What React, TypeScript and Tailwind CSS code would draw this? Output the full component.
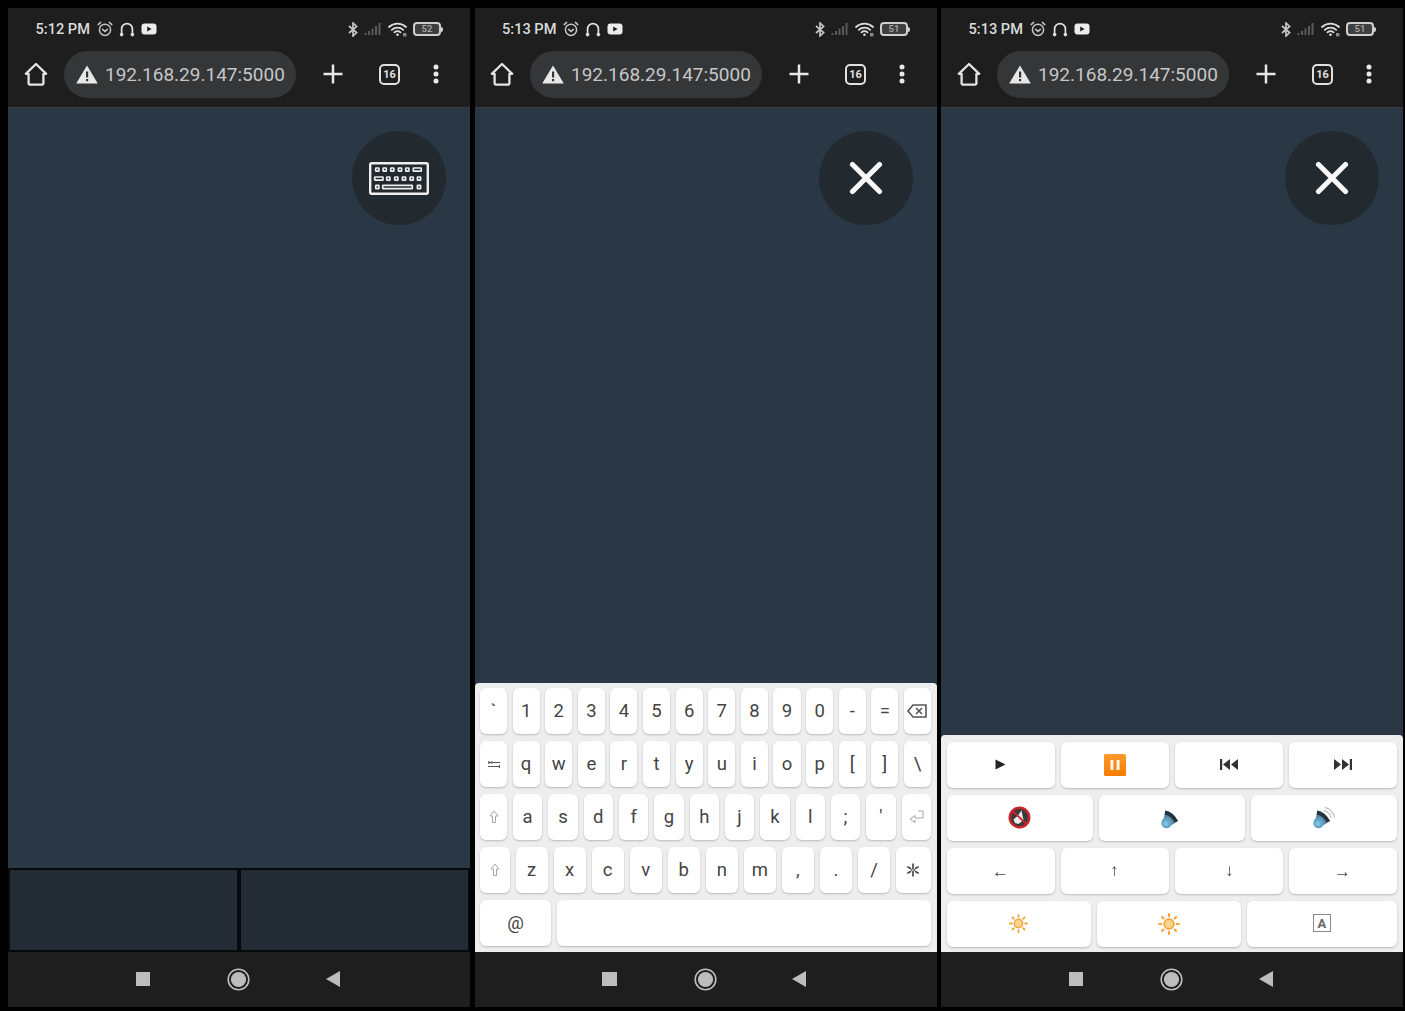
import React from "react";

const F = { fontFamily: "Roboto, 'Liberation Sans', sans-serif" };

function Alarm() {
  return (
    <svg width="16" height="16" viewBox="0 0 16 16" fill="none" stroke="#c4c4c4" strokeWidth="1.5" strokeLinecap="round">
      <circle cx="8" cy="8.8" r="5.6" />
      <path d="M1.2 3.6 3.6 1.4M14.8 3.6 12.4 1.4M5.6 8.4 8 10.4l2.4-2" />
    </svg>
  );
}
function Headset() {
  return (
    <svg width="16" height="15" viewBox="0 0 16 15" fill="none" stroke="#e0e0e0" strokeWidth="1.7" strokeLinecap="round">
      <path d="M2.6 11V7a5.4 5.4 0 0 1 10.8 0v4" />
      <circle cx="2.6" cy="12.6" r="1.8" fill="#e0e0e0" stroke="none" />
      <circle cx="13.4" cy="12.6" r="1.8" fill="#e0e0e0" stroke="none" />
    </svg>
  );
}
function Yt() {
  return (
    <svg width="16" height="12" viewBox="0 0 16 12">
      <rect x="0.5" y="0.5" width="15" height="11" rx="3" fill="#ececec" />
      <path d="M6.2 3.4 10.6 6l-4.4 2.6z" fill="#1e1e1e" />
    </svg>
  );
}
function Bt() {
  return (
    <svg width="10" height="15" viewBox="0 0 10 15" fill="none" stroke="#c4c4c4" strokeWidth="1.7">
      <path d="M1 4l7.6 6.6L5 14V1l3.6 3.4L1 11" />
    </svg>
  );
}
function Signal() {
  return (
    <svg width="18" height="14" viewBox="0 0 18 14" fill="#5a5a5a">
      <rect x="0.5" y="11" width="2" height="2" />
      <rect x="4" y="9" width="2" height="4" />
      <rect x="7.5" y="6.5" width="2" height="6.5" />
      <rect x="11" y="4" width="2" height="9" />
      <rect x="14.5" y="1" width="2" height="12" />
    </svg>
  );
}
function Wifi() {
  return (
    <svg width="20" height="15" viewBox="0 0 20 15" fill="none" stroke="#dcdcdc" strokeWidth="1.8" strokeLinecap="round">
      <path d="M1 5a12.5 12.5 0 0 1 17 0M3.8 7.8a8.4 8.4 0 0 1 11.4 0M6.5 10.4a4.4 4.4 0 0 1 6 0" />
      <circle cx="9.5" cy="12.8" r="1.3" fill="#dcdcdc" stroke="none" />
      <rect x="15" y="11" width="3.4" height="3.4" fill="#8a8a8a" stroke="none" />
    </svg>
  );
}
function Battery({ n }: { n: string }) {
  return (
    <div className="flex items-center">
      <div className="w-[28px] h-[14px] border-2 border-[#cfcfcf] rounded-[4px] flex items-center justify-center text-[9.5px] leading-none font-medium text-[#aaaaaa] bg-[#3f3f3f]">
        {n}
      </div>
      <div className="w-[2px] h-[5px] bg-[#cfcfcf] rounded-r-sm" />
    </div>
  );
}

function StatusBar({ time, battery, nudge }: { time: string; battery: string; nudge?: boolean }) {
  return (
    <div className={"h-[42px] flex items-center pr-[27px] shrink-0 " + (nudge ? "pl-[27px]" : "pl-[27.5px]")}>
      <span className="text-[14.6px] font-medium text-[#dadada] mr-[7px] leading-none">{time}</span>
      <div className="flex items-center gap-[6px]">
        <Alarm />
        <Headset />
        <Yt />
      </div>
      <div className="ml-auto flex items-center">
        <Bt />
        <span className="ml-[6px]"><Signal /></span>
        <span className="ml-[6px]"><Wifi /></span>
        <span className="ml-[5px]"><Battery n={battery} /></span>
      </div>
    </div>
  );
}

function Toolbar({ nudge }: { nudge?: boolean }) {
  return (
    <div className={"h-[58px] shrink-0 border-b border-[#3c3d3e] pb-[9px] flex items-center " + (nudge ? "pl-[15px]" : "pl-[16px]")}>
      <svg width="24" height="24" viewBox="0 0 24 24" fill="none" stroke="#e4e4e4" strokeWidth="2.3" strokeLinejoin="round" className="mr-[16px]">
        <path d="M1.8 11.8 12 2l10.2 9.8h-2.8v9.8a1 1 0 0 1-1 1H5.6a1 1 0 0 1-1-1v-9.8z" />
      </svg>
      <div className="w-[232px] h-[47px] rounded-full bg-[#343638] flex items-center pl-[12px]">
        <svg width="22" height="19" viewBox="0 0 22 19" className="mr-[7px] shrink-0">
          <path d="M11 0.5 21.8 18.6H0.2z" fill="#e8e8e8" />
          <rect x="10" y="6.5" width="2.2" height="6" fill="#343638" />
          <rect x="10" y="14" width="2.2" height="2.2" fill="#343638" />
        </svg>
        <span className="text-[19px] text-[#c6c7c8] leading-none whitespace-nowrap pt-[1px]">192.168.29.147:5000</span>
      </div>
      <svg width="20" height="20" viewBox="0 0 20 20" stroke="#e8e8e8" strokeWidth="2.5" className="ml-[27px]">
        <path d="M10 0.5v19M0.5 10h19" />
      </svg>
      <div className="ml-[36px] w-[21px] h-[21px] border-2 border-[#e0e0e0] rounded-[5px] flex items-center justify-center text-[11px] font-bold leading-none text-[#e0e0e0]">
        16
      </div>
      <svg width="6" height="20" viewBox="0 0 6 20" fill="#e8e8e8" className="ml-[33px]">
        <circle cx="3" cy="3" r="2.5" />
        <circle cx="3" cy="10" r="2.5" />
        <circle cx="3" cy="17" r="2.5" />
      </svg>
    </div>
  );
}

function NavBar({ nudge }: { nudge?: boolean }) {
  return (
    <div className={"h-[55px] shrink-0 bg-[#1e1e1e] flex items-center pb-[1px] " + (nudge ? "pl-[127px]" : "pl-[127.5px]")}>
      <div className="w-[14.5px] h-[14.5px] bg-[#bdbdbd]" />
      <svg width="23" height="23" viewBox="0 0 23 23" className="ml-[77px]">
        <circle cx="11.5" cy="11.5" r="10.3" fill="none" stroke="#bdbdbd" strokeWidth="1.6" />
        <circle cx="11.5" cy="11.5" r="7.6" fill="#bdbdbd" />
      </svg>
      <svg width="14" height="16" viewBox="0 0 14 16" className="ml-[75.5px]">
        <path d="M14 0v16L0 8z" fill="#bdbdbd" />
      </svg>
    </div>
  );
}

function KeyboardIcon() {
  const sq = (x: number, y: number) => <rect key={x + "-" + y} x={x - 1.6} y={y - 1.6} width="3.2" height="3.2" rx="0.4" />;
  return (
    <svg width="60" height="33" viewBox="0 0 60 33" fill="none" stroke="#eeeeee" strokeWidth="1.7">
      <rect x="1.2" y="1.2" width="57.6" height="30.6" rx="1.5" strokeWidth="2.4" />
      {[8.3, 15.7, 23.3, 31, 38.3].map((x) => sq(x, 7.6))}
      <rect x="44.3" y="6" width="8" height="3.2" rx="0.4" />
      <rect x="5.7" y="15" width="8.3" height="3.2" rx="0.4" />
      {[19.3, 27.3, 35, 42.7, 50].map((x) => sq(x, 16.6))}
      {sq(8.3, 25)}
      <rect x="13.7" y="23.4" width="29.6" height="3.2" rx="0.4" />
      {sq(50, 25)}
    </svg>
  );
}

function Fab({ close }: { close?: boolean }) {
  return (
    <div className="absolute top-[23px] right-[24px] w-[94px] h-[94px] rounded-full bg-[#22292f] flex items-center justify-center">
      {close ? (
        <svg width="34" height="34" viewBox="0 0 34 34" stroke="#f8f8f8" strokeWidth="5.2" strokeLinecap="round">
          <path d="M3.5 3.5l27 27M30.5 3.5l-27 27" />
        </svg>
      ) : (
        <KeyboardIcon />
      )}
    </div>
  );
}

function Key({ className = "", children }: { className?: string; children?: React.ReactNode }) {
  return (
    <div className={"h-[46px] bg-white rounded-[6px] shadow-[0_1px_2px_rgba(0,0,0,0.22)] flex items-center justify-center text-[#444444] leading-none " + className}>
      {children}
    </div>
  );
}

const Backspace = () => (
  <svg width="20" height="14" viewBox="0 0 20 14" fill="none" stroke="#555" strokeWidth="1.6">
    <path d="M6 1h13v12H6L1 7z" />
    <path d="M9 4l6 6M15 4l-6 6" />
  </svg>
);
const Tab = () => (
  <svg width="12" height="9" viewBox="0 0 12 9" fill="none" stroke="#555" strokeWidth="1.1">
    <path d="M0 2.5h4M1 1v3M4 1v3M5 2.5h7M0 6.5h11M11.5 5v3" />
  </svg>
);
const Shift = () => (
  <svg width="10" height="14" viewBox="0 0 10 14" fill="none" stroke="#a6a6a6" strokeWidth="1">
    <path d="M5 1 1 6h2.5v6.5h3V6H9z" />
  </svg>
);
const Enter = () => (
  <svg width="15" height="14" viewBox="0 0 15 14" fill="none" stroke="#a6a6a6" strokeWidth="1">
    <path d="M9 1h5v7H6V5.5L1 9l5 3.5V10" />
  </svg>
);
const Star = () => (
  <svg width="14" height="14" viewBox="0 0 14 14" stroke="#3f3f3f" strokeWidth="1.6" fill="none">
    <path d="M7 0.5v4.5M7 9v4.5M1.3 3.6 5 5.7M9 8.3l3.7 2.1M12.7 3.6 9 5.7M5 8.3l-3.7 2.1" />
    <circle cx="7" cy="7" r="1.4" strokeWidth="1" />
  </svg>
);

function KeyRow({ keys, gap, firstW, lastW }: { keys: React.ReactNode[]; gap: string; firstW?: string; lastW?: string }) {
  return (
    <div className={"flex " + gap}>
      {keys.map((k, i) => {
        const w = i === 0 && firstW ? firstW + " shrink-0" : i === keys.length - 1 && lastW ? lastW + " shrink-0" : "flex-1 min-w-0";
        return (
          <Key key={i} className={w + " text-[18.5px]"}>
            {k}
          </Key>
        );
      })}
    </div>
  );
}

function Keyboard() {
  return (
    <div className="h-[269px] shrink-0 bg-[#eeeeee] rounded-t-[4px] pt-[5px] pl-[5px] pr-[6px] flex flex-col gap-[7px]">
      <KeyRow gap="gap-[5.6px]" keys={["`", "1", "2", "3", "4", "5", "6", "7", "8", "9", "0", "-", "=", <Backspace />]} />
      <KeyRow gap="gap-[5.6px]" keys={[<Tab />, "q", "w", "e", "r", "t", "y", "u", "i", "o", "p", "[", "]", "\\"]} />
      <KeyRow gap="gap-[5.9px]" firstW="w-[27px]" keys={[<Shift />, "a", "s", "d", "f", "g", "h", "j", "k", "l", ";", "'", <Enter />]} />
      <KeyRow gap="gap-[6px]" firstW="w-[29.5px]" lastW="w-[35px]" keys={[<Shift />, "z", "x", "c", "v", "b", "n", "m", ",", ".", "/", <Star />]} />
      <KeyRow gap="gap-[6px]" firstW="w-[71px]" keys={["@", ""]} />
    </div>
  );
}

const Play = () => (
  <svg width="11" height="11" viewBox="0 0 11 11"><path d="M0.5 0.5 10.5 5.5 0.5 10.5z" fill="#222" /></svg>
);
const Prev = () => (
  <svg width="18" height="11" viewBox="0 0 18 11" fill="#333">
    <rect x="0" y="0" width="2.2" height="11" />
    <path d="M10 0v11L3 5.5zM18 0v11l-7-5.5z" />
  </svg>
);
const Next = () => (
  <svg width="18" height="11" viewBox="0 0 18 11" fill="#333">
    <rect x="15.8" y="0" width="2.2" height="11" />
    <path d="M0 0v11l7-5.5zM8 0v11l7-5.5z" />
  </svg>
);
const Pause = () => (
  <svg width="22" height="22" viewBox="0 0 22 22">
    <defs>
      <linearGradient id="pz" x1="0" y1="0" x2="0" y2="1">
        <stop offset="0" stopColor="#fb9a2b" />
        <stop offset="1" stopColor="#f57c00" />
      </linearGradient>
    </defs>
    <rect width="22" height="22" rx="1.5" fill="url(#pz)" />
    <rect x="6.4" y="6" width="3" height="10" rx="0.6" fill="#fff" opacity="0.92" />
    <rect x="12.6" y="6" width="3" height="10" rx="0.6" fill="#fff" opacity="0.92" />
  </svg>
);
const Speaker = ({ waves }: { waves?: boolean }) => (
  <svg width="24" height="24" viewBox="0 0 24 24">
    {waves && (
      <path d="M11.5 4.5a8.5 8.5 0 0 1 7.5 8M12.5 1.5a12 12 0 0 1 10 10" fill="none" stroke="#c2c2c2" strokeWidth="1.3" />
    )}
    <path d="M5.5 4.5Q13 6 18 15L9.5 20.5 3.5 13z" fill="#5d87a0" />
    <path d="M5.5 4.5Q13 6 18 15L14.5 16.5Q11.5 10 4.5 8.5z" fill="#253240" />
    <circle cx="6.5" cy="17" r="5.2" fill="#5fa5c8" />
    <circle cx="6" cy="17.5" r="2.6" fill="#7fc0dc" />
  </svg>
);
const Muted = () => (
  <svg width="23" height="23" viewBox="0 0 23 23">
    <circle cx="11.5" cy="11.5" r="9.8" fill="#3a3a3a" stroke="#c8252c" strokeWidth="2.4" />
    <path d="M13.5 4.5 15.5 14 10.5 18 7 17 5.5 13.5 9.5 10z" fill="#ececec" />
    <path d="M4.5 5 18.5 18" stroke="#c8252c" strokeWidth="1.8" />
  </svg>
);
const Sun = ({ s }: { s: number }) => (
  <svg width={s} height={s} viewBox="0 0 20 20" fill="none" stroke="#f4a338" strokeLinecap="round">
    <circle cx="10" cy="10" r="4.4" strokeWidth="1.5" fill="#fbd58e" />
    <path strokeWidth="1.9" d="M10 1v2M10 17v2M1 10h2M17 10h2M3.6 3.6l1.4 1.4M15 15l1.4 1.4M3.6 16.4 5 15M15 5l1.4-1.4" />
  </svg>
);

function MediaPanel() {
  const b = "text-[17px] ";
  const arrow = "will-change-transform text-[#444444]";
  return (
    <div className="h-[217px] shrink-0 bg-[#eeeeee] rounded-t-[4px] pt-[6.5px] pl-[5.5px] pr-[6px] flex flex-col gap-[7px]">
      <div className="grid grid-cols-4 gap-[6px]">
        <Key><Play /></Key>
        <Key><Pause /></Key>
        <Key><Prev /></Key>
        <Key><Next /></Key>
      </div>
      <div className="grid grid-cols-3 gap-[6px]">
        <Key><Muted /></Key>
        <Key><Speaker /></Key>
        <Key><Speaker waves /></Key>
      </div>
      <div className="grid grid-cols-4 gap-[6px]">
        <Key className={b + "pt-[2px]"}><span className={arrow}>←</span></Key>
        <Key className={b}><span className={arrow}>↑</span></Key>
        <Key className={b}><span className={arrow}>↓</span></Key>
        <Key className={b + "pt-[2px]"}><span className={arrow}>→</span></Key>
      </div>
      <div className="grid grid-cols-[144px_144px_1fr] gap-[6px]">
        <Key><Sun s={19} /></Key>
        <Key><Sun s={22} /></Key>
        <Key className="pb-[1px]">
          <div className="w-[18px] h-[18px] border border-[#8a8a8a] flex items-center justify-center text-[13px] font-bold text-[#666]">A</div>
        </Key>
      </div>
    </div>
  );
}

function Phone({ time, battery, close, nudge, children, className = "" }: { time: string; battery: string; close?: boolean; nudge?: boolean; children?: React.ReactNode; className?: string }) {
  return (
    <div className={"w-[462px] h-[999px] shrink-0 bg-[#1e1e1e] flex flex-col " + className}>
      <StatusBar time={time} battery={battery} nudge={nudge} />
      <Toolbar nudge={nudge} />
      <div className="flex-1 min-h-0 relative bg-[#2a3745] flex flex-col justify-end">
        <Fab close={close} />
        {children}
      </div>
      <NavBar nudge={nudge} />
    </div>
  );
}

export default function App() {
  return (
    <div className="w-[1405px] h-[1011px] bg-black flex pt-[8px] pl-[8px] overflow-hidden" style={F}>
      <Phone time="5:12 PM" battery="52">
        <div className="h-[84px] shrink-0 flex bg-[#070a0d] border-t-2 border-[#070a0d]">
          <div className="ml-[1.5px] mb-[2px] w-[227px] bg-[#232c35]" />
          <div className="ml-[4.5px] mr-[2px] mb-[2px] flex-1 bg-[#232c35]" />
        </div>
      </Phone>
      <Phone time="5:13 PM" battery="51" close nudge className="ml-[5px]">
        <Keyboard />
      </Phone>
      <Phone time="5:13 PM" battery="51" close className="ml-[4px]">
        <MediaPanel />
      </Phone>
    </div>
  );
}
